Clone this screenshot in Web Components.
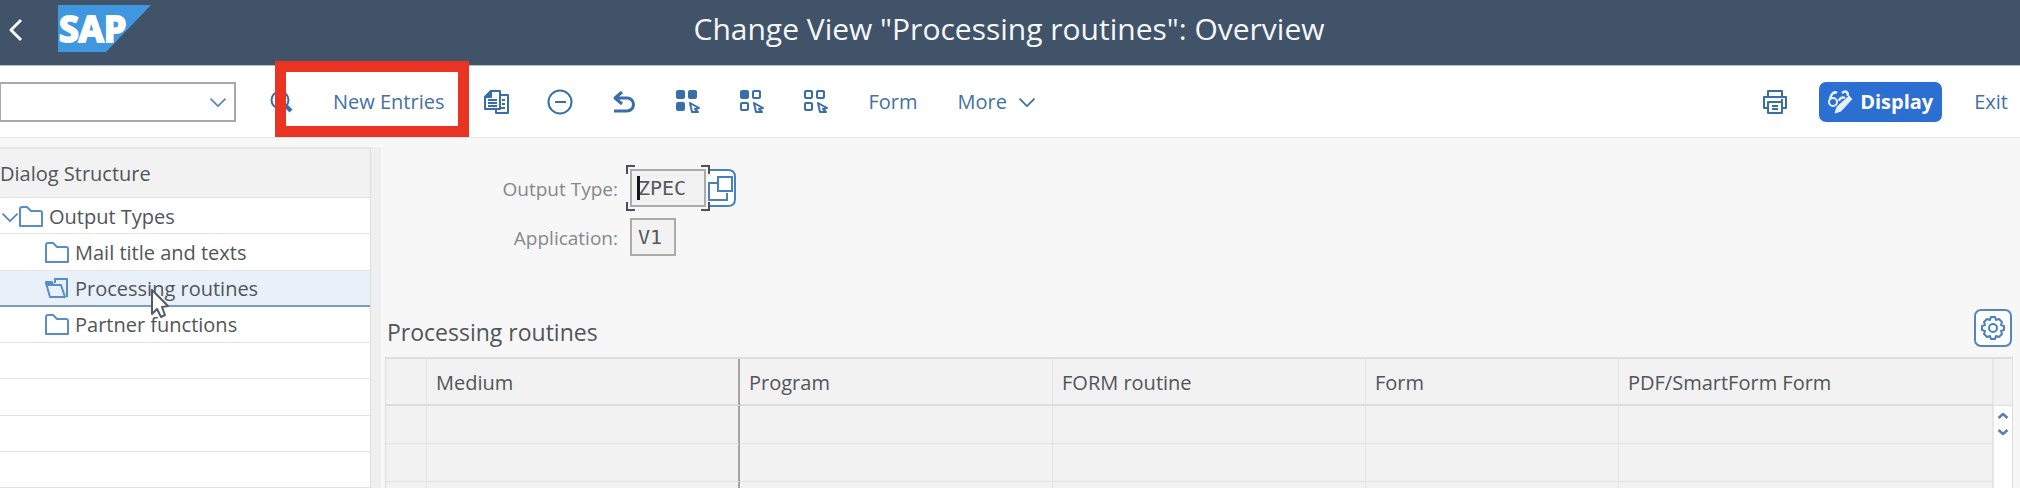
<!DOCTYPE html>
<html lang="en">
<head>
<meta charset="utf-8">
<title>Change View "Processing routines": Overview</title>
<style>
  html, body { margin: 0; height: 100%; }
  body { font: 20px/28px "Open Sans", "Noto Sans", sans-serif; color: #51555a; background: #fff; overflow: hidden; }
</style>
</head>
<body>
<view-page>
  <shell-header slot="header">Change View "Processing routines": Overview</shell-header>

  <tool-bar slot="toolbar">
    <command-field slot="command"></command-field>
    <tool-button icon="search" label="Search"></tool-button>
    <call-out><tool-button>New Entries</tool-button></call-out>
    <tool-button icon="copy" label="Copy As"></tool-button>
    <tool-button icon="minus" label="Delete"></tool-button>
    <tool-button icon="undo" label="Undo Change"></tool-button>
    <tool-button icon="select-all" label="Select All"></tool-button>
    <tool-button icon="select-block" label="Select Block"></tool-button>
    <tool-button icon="deselect" label="Deselect All"></tool-button>
    <tool-button>Form</tool-button>
    <tool-button menu>More</tool-button>
    <tool-button slot="end" icon="print" label="Print"></tool-button>
    <tool-button slot="end" icon="toggle" primary>Display</tool-button>
    <tool-button slot="end">Exit</tool-button>
  </tool-bar>

  <dialog-tree slot="side" heading="Dialog Structure">
    <tree-row open>Output Types</tree-row>
    <tree-row level="2">Mail title and texts</tree-row>
    <tree-row level="2" selected>Processing routines</tree-row>
    <tree-row level="2">Partner functions</tree-row>
    <tree-row empty></tree-row>
    <tree-row empty></tree-row>
    <tree-row empty></tree-row>
    <tree-row empty></tree-row>
  </dialog-tree>

  <key-field label="Output Type:" value="ZPEC" size="4" focused></key-field>
  <key-field label="Application:" value="V1" size="2"></key-field>
  <entry-table heading="Processing routines" columns="Medium|Program|FORM routine|Form|PDF/SmartForm Form" rows="3"></entry-table>
</view-page>

<script>
const ICONS = {
  back: '<path d="M17 2 L7 12 L17 22" stroke-width="3"/>',
  down: '<path d="M3 8 L12 17 L21 8"/>',
  search: '<circle cx="11" cy="10" r="8.5"/><path d="M7 10 L10 13 L15 8"/><path d="M17 16 L22 21" stroke-width="4"/>',
  copy: '<path fill="#fff" d="M15 5 H24 V23 H12 V20"/><path d="M18 10 H21 M18 14 H21 M16 18 H21"/><path fill="#fff" d="M7 1 H16 V19 H1 V7 Z"/><path fill="currentColor" d="M7 1 V7 H1 Z"/><path d="M4 10 H13 M4 13 H13 M4 16 H13"/>',
  minus: '<circle cx="12" cy="12" r="11.5"/><path d="M7 12 H18"/>',
  undo: '<path d="M10 2 L3 8 L10 14 M3 8 H15 A6.5 6.5 0 0 1 15 21 H2" stroke-width="3"/>',
  'select-all': '<rect fill="currentColor" x="1" y="1" width="7" height="7" rx="1"/><rect fill="currentColor" x="13" y="1" width="7" height="7" rx="1"/><rect fill="currentColor" x="1" y="13" width="7" height="7" rx="1"/><path fill="#fff" d="M14 13 L23 18 L19 19 L22 22 H16 Z"/>',
  'select-block': '<rect fill="currentColor" x="1" y="1" width="7" height="7" rx="1"/><rect x="13" y="1" width="7" height="7" rx="1"/><rect x="1" y="13" width="7" height="7" rx="1"/><path fill="#fff" d="M14 13 L23 18 L19 19 L22 22 H16 Z"/>',
  deselect: '<rect x="1" y="1" width="7" height="7" rx="1"/><rect x="13" y="1" width="7" height="7" rx="1"/><rect x="1" y="13" width="7" height="7" rx="1"/><path fill="#fff" d="M14 13 L23 18 L19 19 L22 22 H16 Z"/>',
  print: '<path d="M5 7 V1 H19 V7"/><path d="M5 18 H1 V7 H23 V18 H19"/><path d="M5 12 H19 V23 H5 Z M9 16 H15 M9 19 H15 M18 10 H20"/>',
  toggle: '<circle cx="5" cy="12" r="4"/><path d="M2 9 C3 4 6 1 9 3 M11 11 A4 4 0 0 1 17 8 M14 3 C18 0 20 2 20 6" stroke-width="2.5"/><path fill="currentColor" stroke-width="1" d="M21 6 L24 9 L13 21 L7 23 L9 17 Z"/>',
  folder: '<path d="M1 21 V4 Q1 2 3 2 H8 L12 6 H21 Q23 6 23 8 V21 Z"/>',
  'folder-open': '<path d="M10 6 V2 H22 V20"/><path d="M1 6 H7 L8 8 H16 L20 20 H5 Z"/><path fill="currentColor" d="M1 5 H7 L8 8 H2 Z"/>',
  up: '<path d="M3 16 L12 8 L21 16" stroke-width="5"/>',
  'down-bold': '<path d="M3 8 L12 16 L21 8" stroke-width="5"/>',
  gear: '<circle cx="12" cy="12" r="4"/><path d="M10 1 H14 L15 4 L18 3 L21 6 L20 9 L23 10 V14 L20 15 L21 18 L18 21 L15 20 L14 23 H10 L9 20 L6 21 L3 18 L4 15 L1 14 V10 L4 9 L3 6 L6 3 L9 4 Z"/>',
};

class UiIcon extends HTMLElement {
  connectedCallback() {
    const sh = this.attachShadow({ mode: 'open' });
    sh.innerHTML = `<style>
      :host{display:block;flex:none;width:24px;height:24px;}
      svg{display:block;width:100%;height:100%;overflow:visible;}
    </style>
    <svg viewBox="0 0 24 24" fill="none" stroke="currentColor" stroke-width="2" stroke-linejoin="round" aria-hidden="true">${ICONS[this.getAttribute('name')]}</svg>`;
  }
}
customElements.define('ui-icon', UiIcon);

class ViewPage extends HTMLElement {
  connectedCallback() {
    const sh = this.attachShadow({ mode: 'open' });
    sh.innerHTML = `<style>
      :host{display:flex;flex-direction:column;height:100%;box-sizing:border-box;padding-bottom:2px;}
      .body{flex:1;display:flex;min-height:0;background:#f7f7f7;}
      aside{flex:none;width:371px;padding-top:9px;display:flex;}
      .split{flex:none;width:10px;margin-top:9px;background:#efefef;}
      main{flex:1;min-width:0;padding:31px 7px 0 4px;display:flex;flex-direction:column;gap:11px;overflow:hidden;}
    </style>
    <slot name="header"></slot>
    <slot name="toolbar"></slot>
    <div class="body">
      <aside><slot name="side"></slot></aside>
      <div class="split"></div>
      <main><slot></slot></main>
    </div>`;
  }
}
customElements.define('view-page', ViewPage);

class ShellHeader extends HTMLElement {
  connectedCallback() {
    const sh = this.attachShadow({ mode: 'open' });
    sh.innerHTML = `<style>
      :host{display:grid;grid-template-columns:1fr auto 1fr;align-items:center;flex:none;height:65px;background:#415368;border-bottom:1px solid #b4bfcb;color:#f5f7fa;}
      .left{display:flex;align-items:center;gap:30px;padding-left:4px;}
      button{border:0;padding:0;margin-bottom:6px;background:none;color:inherit;}
      .logo{display:block;width:93px;height:47px;margin-bottom:9px;overflow:visible;}
      h1{margin:0 2px 8px 0;font-size:30px;line-height:40px;font-weight:400;white-space:nowrap;}
    </style>
    <div class="left">
      <button aria-label="Back"><ui-icon name="back"></ui-icon></button>
      <svg class="logo" viewBox="0 0 93 47" role="img" aria-label="SAP">
        <path fill="#3f97e0" d="M0 0 H93 L48 47 H0 Z"/>
        <text x="1" y="37" font-size="36" font-weight="700" font-family="Open Sans, sans-serif" fill="#fff" stroke="#fff" stroke-width="2">SAP</text>
      </svg>
    </div>
    <h1><slot></slot></h1>`;
  }
}
customElements.define('shell-header', ShellHeader);

class ToolBar extends HTMLElement {
  connectedCallback() {
    const sh = this.attachShadow({ mode: 'open' });
    sh.innerHTML = `<style>
      :host{display:flex;align-items:center;flex:none;height:72px;box-sizing:border-box;padding:1px 12px 0 0;background:#fff;border-bottom:1px solid #e6e6e6;}
      .items{display:flex;align-items:center;gap:40px;margin-left:33px;}
      .end{display:flex;align-items:center;gap:32px;margin-left:auto;}
    </style>
    <slot name="command"></slot>
    <div class="items"><slot></slot></div>
    <div class="end"><slot name="end"></slot></div>`;
  }
}
customElements.define('tool-bar', ToolBar);

class CommandField extends HTMLElement {
  connectedCallback() {
    const sh = this.attachShadow({ mode: 'open' });
    sh.innerHTML = `<style>
      :host{display:flex;align-items:center;flex:none;width:236px;height:40px;box-sizing:border-box;border:2px solid #a9a9a9;border-left-width:1px;background:#fff;}
      input{flex:1;min-width:0;border:0;outline:0;padding:0 8px;font:inherit;background:none;}
      button{border:0;padding:0 6px;background:none;color:#5b83b3;}
      ui-icon{width:20px;height:20px;}
    </style>
    <input type="text" aria-label="Transaction code">
    <button aria-label="Show history"><ui-icon name="down"></ui-icon></button>`;
  }
}
customElements.define('command-field', CommandField);

class ToolButton extends HTMLElement {
  connectedCallback() {
    const icon = this.getAttribute('icon');
    const label = this.getAttribute('label');
    const sh = this.attachShadow({ mode: 'open' });
    sh.innerHTML = `<style>
      :host{display:block;flex:none;}
      button{display:flex;align-items:center;gap:10px;border:0;padding:0;background:none;font:inherit;color:#4470a3;cursor:pointer;white-space:nowrap;}
      ui-icon{color:#3a6eab;}
      .menu{width:20px;height:20px;}
      :host([primary]) button{height:40px;padding:0 9px;gap:8px;border-radius:7px;background:#2b6fd3;color:#fff;font-weight:700;}
      :host([primary]) ui-icon{color:#e6f1ff;}
    </style>
    <button${label ? ` aria-label="${label}"` : ''}>
      ${icon ? `<ui-icon name="${icon}"></ui-icon>` : ''}
      ${label ? '' : '<span><slot></slot></span>'}
      ${this.hasAttribute('menu') ? '<ui-icon class="menu" name="down"></ui-icon>' : ''}
    </button>`;
  }
}
customElements.define('tool-button', ToolButton);

// red frame laid over a toolbar item
class CallOut extends HTMLElement {
  connectedCallback() {
    const sh = this.attachShadow({ mode: 'open' });
    sh.innerHTML = `<style>
      :host{display:block;position:relative;flex:none;}
      div{position:absolute;inset:-27px -25px -21px -58px;border:11px solid #e93323;pointer-events:none;z-index:2;}
    </style>
    <slot></slot><div></div>`;
  }
}
customElements.define('call-out', CallOut);

class DialogTree extends HTMLElement {
  connectedCallback() {
    const sh = this.attachShadow({ mode: 'open' });
    sh.innerHTML = `<style>
      :host{flex:1;display:flex;flex-direction:column;border-top:2px solid #e6e6e6;border-right:1px solid #dedede;background:#fff;}
      h2{margin:0;height:48px;line-height:50px;font-size:20px;font-weight:400;background:#f2f2f2;border-bottom:1px solid #e0e0e0;}
      .rows{flex:1;display:grid;grid-auto-rows:1fr;}
    </style>
    <h2>${this.getAttribute('heading')}</h2>
    <div class="rows" role="tree"><slot></slot></div>`;
  }
}
customElements.define('dialog-tree', DialogTree);

class TreeRow extends HTMLElement {
  connectedCallback() {
    const selected = this.hasAttribute('selected');
    const sh = this.attachShadow({ mode: 'open' });
    sh.innerHTML = `<style>
      :host{display:flex;align-items:center;gap:6px;position:relative;box-sizing:border-box;padding-top:2px;border-bottom:1px solid #e4e4e4;}
      :host([level="2"]){padding-left:45px;}
      :host([selected]){background:#e8f0f9;border-bottom:2px solid #7f9bbb;}
      ui-icon{color:#5a8cc6;}
      .arrow{width:20px;height:20px;margin-right:-7px;color:#5b83b3;}
      .pointer{position:absolute;left:150px;top:18px;width:20px;height:30px;z-index:2;}
    </style>
    ${this.hasAttribute('open') ? '<ui-icon class="arrow" name="down"></ui-icon>' : ''}
    ${this.hasAttribute('empty') ? '' : `<ui-icon name="${selected ? 'folder-open' : 'folder'}"></ui-icon><span><slot></slot></span>`}
    ${selected ? '<svg class="pointer" viewBox="0 0 20 30"><path d="M2 1 V25 L7 20 L11 28 L15 26 L12 18 L18 17 Z" fill="#fff" stroke="#555b63" stroke-width="2" stroke-linejoin="round"/></svg>' : ''}`;
    this.setAttribute('role', this.hasAttribute('empty') ? 'presentation' : 'treeitem');
  }
}
customElements.define('tree-row', TreeRow);

class KeyField extends HTMLElement {
  connectedCallback() {
    const focused = this.hasAttribute('focused');
    const sh = this.attachShadow({ mode: 'open' });
    sh.innerHTML = `<style>
      :host{display:flex;align-items:center;gap:12px;}
      label{width:233px;padding-top:2px;text-align:right;font-size:19px;color:#85888c;}
      .box{position:relative;display:flex;}
      input{box-sizing:content-box;width:${focused ? 60 : 30}px;height:34px;padding:0 6px;border:2px solid #ababab;outline:0;background:#f2f2f2;color:#55585c;font:20px "DejaVu Sans Mono",monospace;}
      .frame{position:absolute;inset:-4px;}
      .frame i{position:absolute;width:7px;height:7px;border:0 solid #4c4f54;}
      .tl{left:0;top:0;border-width:2px 0 0 2px !important;}
      .tr{right:0;top:0;border-width:2px 2px 0 0 !important;}
      .bl{left:0;bottom:0;border-width:0 0 2px 2px !important;}
      .br{right:0;bottom:0;border-width:0 2px 2px 0 !important;}
      .caret{position:absolute;left:7px;top:7px;width:3px;height:24px;background:#15171a;}
      button{width:29px;height:38px;padding:0;margin-left:-10px;border:0;background:none;color:#4a80bd;}
      svg{display:block;}
    </style>
    <label for="f">${this.getAttribute('label')}</label>
    <div class="box">
      <input id="f" type="text" value="${this.getAttribute('value')}" readonly>
      ${focused ? '<div class="frame"><i class="tl"></i><i class="tr"></i><i class="bl"></i><i class="br"></i></div><div class="caret"></div>' : ''}
    </div>
    ${focused ? `<button aria-label="Value help"><svg width="29" height="38" viewBox="0 0 29 38" fill="none" stroke="currentColor" stroke-width="2">
      <path fill="#fff" d="M0 1 H20 Q27 1 27 8 V30 Q27 37 20 37 H0"/><path d="M9 14 H1 V31 H19 V24"/><path d="M10 8 H24 V22 H10 Z"/></svg></button>` : ''}`;
  }
}
customElements.define('key-field', KeyField);

class EntryTable extends HTMLElement {
  connectedCallback() {
    const cols = this.getAttribute('columns').split('|');
    const row = `<tr><td></td>${cols.map(() => '<td></td>').join('')}</tr>`;
    const sh = this.attachShadow({ mode: 'open' });
    sh.innerHTML = `<style>
      :host{display:flex;flex-direction:column;flex:1;gap:10px;margin-top:42px;min-height:0;}
      header{display:flex;align-items:center;justify-content:space-between;}
      h2{margin:0;padding:8px 0 0 2px;font-size:23px;line-height:30px;font-weight:400;}
      .settings{width:38px;height:38px;padding:5px;margin-right:1px;border:2px solid #5685bb;border-radius:7px;background:#fff;color:#4a80bd;}
      .grid{flex:1;display:flex;min-height:0;overflow:hidden;border:1px solid #dedede;border-top-width:2px;border-bottom:0;background:#f2f2f2;}
      .grid>div:first-child{flex:1;min-width:0;}
      table{width:100%;table-layout:fixed;border-collapse:separate;border-spacing:0;}
      th,td{box-sizing:border-box;height:38px;padding:0 9px;border-right:1px solid #e4e4e4;border-bottom:1px solid #e2e2e2;text-align:left;font-weight:400;white-space:nowrap;}
      th{height:47px;padding-top:2px;border-bottom:2px solid #dcdcdc;}
      th:nth-child(2),td:nth-child(2){border-right:2px solid #a3a3a3;}
      .scroll{flex:none;width:18px;display:flex;flex-direction:column;border-left:1px solid #e8e8e8;}
      .cap{height:46px;border-bottom:1px solid #dedede;}
      .track{flex:1;display:flex;flex-direction:column;gap:4px;padding-top:4px;background:#fff;}
      .track button{display:block;padding:0 3px;border:0;background:none;color:#5b7fb0;}
      .track ui-icon{width:12px;height:12px;}
    </style>
    <header>
      <h2>${this.getAttribute('heading')}</h2>
      <button class="settings" aria-label="Settings"><ui-icon name="gear"></ui-icon></button>
    </header>
    <div class="grid">
      <div><table>
        <colgroup><col style="width:41px"><col style="width:313px"><col style="width:313px"><col style="width:313px"><col style="width:253px"><col></colgroup>
        <thead><tr><th></th>${cols.map((c) => `<th>${c}</th>`).join('')}</tr></thead>
        <tbody>${row.repeat(Number(this.getAttribute('rows')))}</tbody>
      </table></div>
      <div class="scroll">
        <div class="cap"></div>
        <div class="track">
          <button aria-label="Scroll up"><ui-icon name="up"></ui-icon></button>
          <button aria-label="Scroll down"><ui-icon name="down-bold"></ui-icon></button>
        </div>
      </div>
    </div>`;
  }
}
customElements.define('entry-table', EntryTable);
</script>
</body>
</html>
